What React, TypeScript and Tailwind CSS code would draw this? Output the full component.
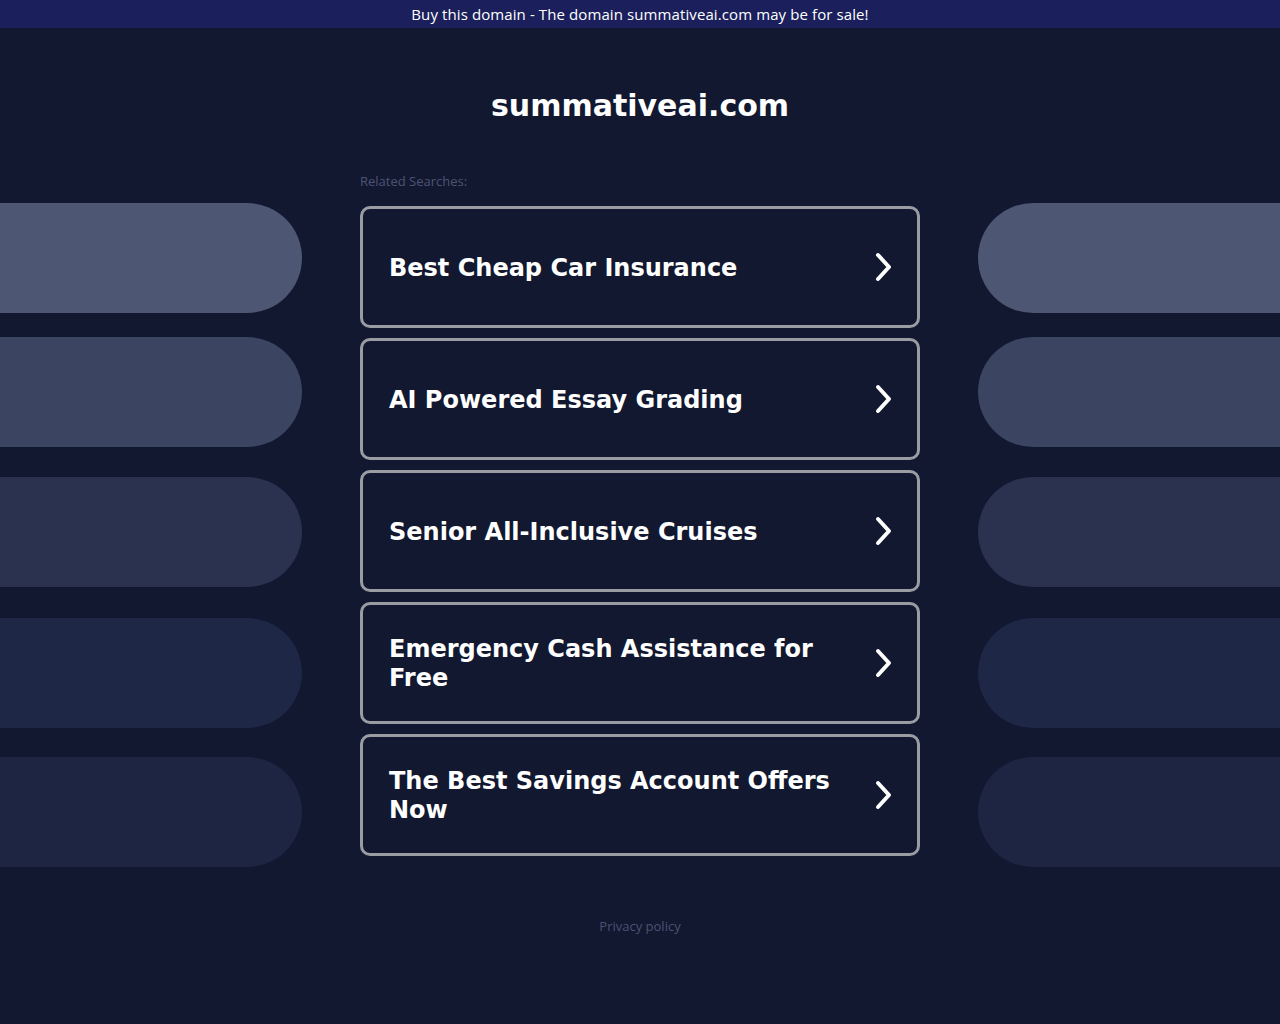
import React from 'react';

const searches = [
    'Best Cheap Car Insurance',
    'AI Powered Essay Grading',
    'Senior All-Inclusive Cruises',
    'Emergency Cash Assistance for Free',
    'The Best Savings Account Offers Now',
];

// Decorative side pills (colour fades down the page)
const pills = [
    { color: 'bg-[#4d5672]', mt: 'mt-0' },
    { color: 'bg-[#3b4461]', mt: 'mt-[24px]' },
    { color: 'bg-[#2a3250]', mt: 'mt-[30px]' },
    { color: 'bg-[#1f2746]', mt: 'mt-[31px]' },
    { color: 'bg-[#1d2543]', mt: 'mt-[29px]' },
];

const Chevron = () => (
    <svg width="22" height="32" viewBox="0 0 22 32" fill="none" className="shrink-0">
        <path d="M6 4 L17 16 L6 28" stroke="white" strokeWidth="4" strokeLinecap="round" strokeLinejoin="round" />
    </svg>
);

const SideColumn: React.FC<{ side: 'left' | 'right' }> = ({ side }) => (
    <div className="flex flex-col pt-[175px] w-[302px] shrink-0">
        {pills.map((p, i) => (
            <div
                key={i}
                className={`${p.color} ${p.mt} h-[110px] w-full ${side === 'left' ? 'rounded-r-[55px]' : 'rounded-l-[55px]'}`}
            />
        ))}
    </div>
);

export default function App() {
    return (
        <div className="min-h-[1024px] bg-[#121830] font-['DejaVu_Sans',sans-serif]">
            {/* Sale banner */}
            <div className="h-[28px] bg-[#1b1f5c] flex items-center justify-center text-white text-[15px] tracking-[0.1px] font-['Open_Sans',sans-serif] font-medium">
                Buy this domain - The domain summativeai.com may be for sale!
            </div>

            <div className="flex justify-between">
                <SideColumn side="left" />

                <div className="w-[560px] shrink-0 flex flex-col">
                    <h1 className="text-white font-bold text-[30px] text-center mt-[56px] leading-[44px]">
                        summativeai.com
                    </h1>

                    <div className="mt-[45px] text-[13px] text-[#4d5473] font-['Open_Sans',sans-serif] leading-[16px]">
                        Related Searches:
                    </div>

                    <div className="mt-[17px] flex flex-col gap-[10px]">
                        {searches.map((s) => (
                            <a
                                key={s}
                                href="#"
                                className="h-[122px] border-[3px] border-[#9a9ca3] rounded-[10px] flex items-center justify-between pl-[26px] pr-[23px]"
                            >
                                <span className="text-white font-bold text-[24px] leading-[29px] pr-6 pt-[2px]">{s}</span>
                                <Chevron />
                            </a>
                        ))}
                    </div>

                    <div className="mt-[61px] text-center text-[13px] text-[#4b5270] font-['Open_Sans',sans-serif]">
                        Privacy policy
                    </div>
                </div>

                <SideColumn side="right" />
            </div>
        </div>
    );
}
